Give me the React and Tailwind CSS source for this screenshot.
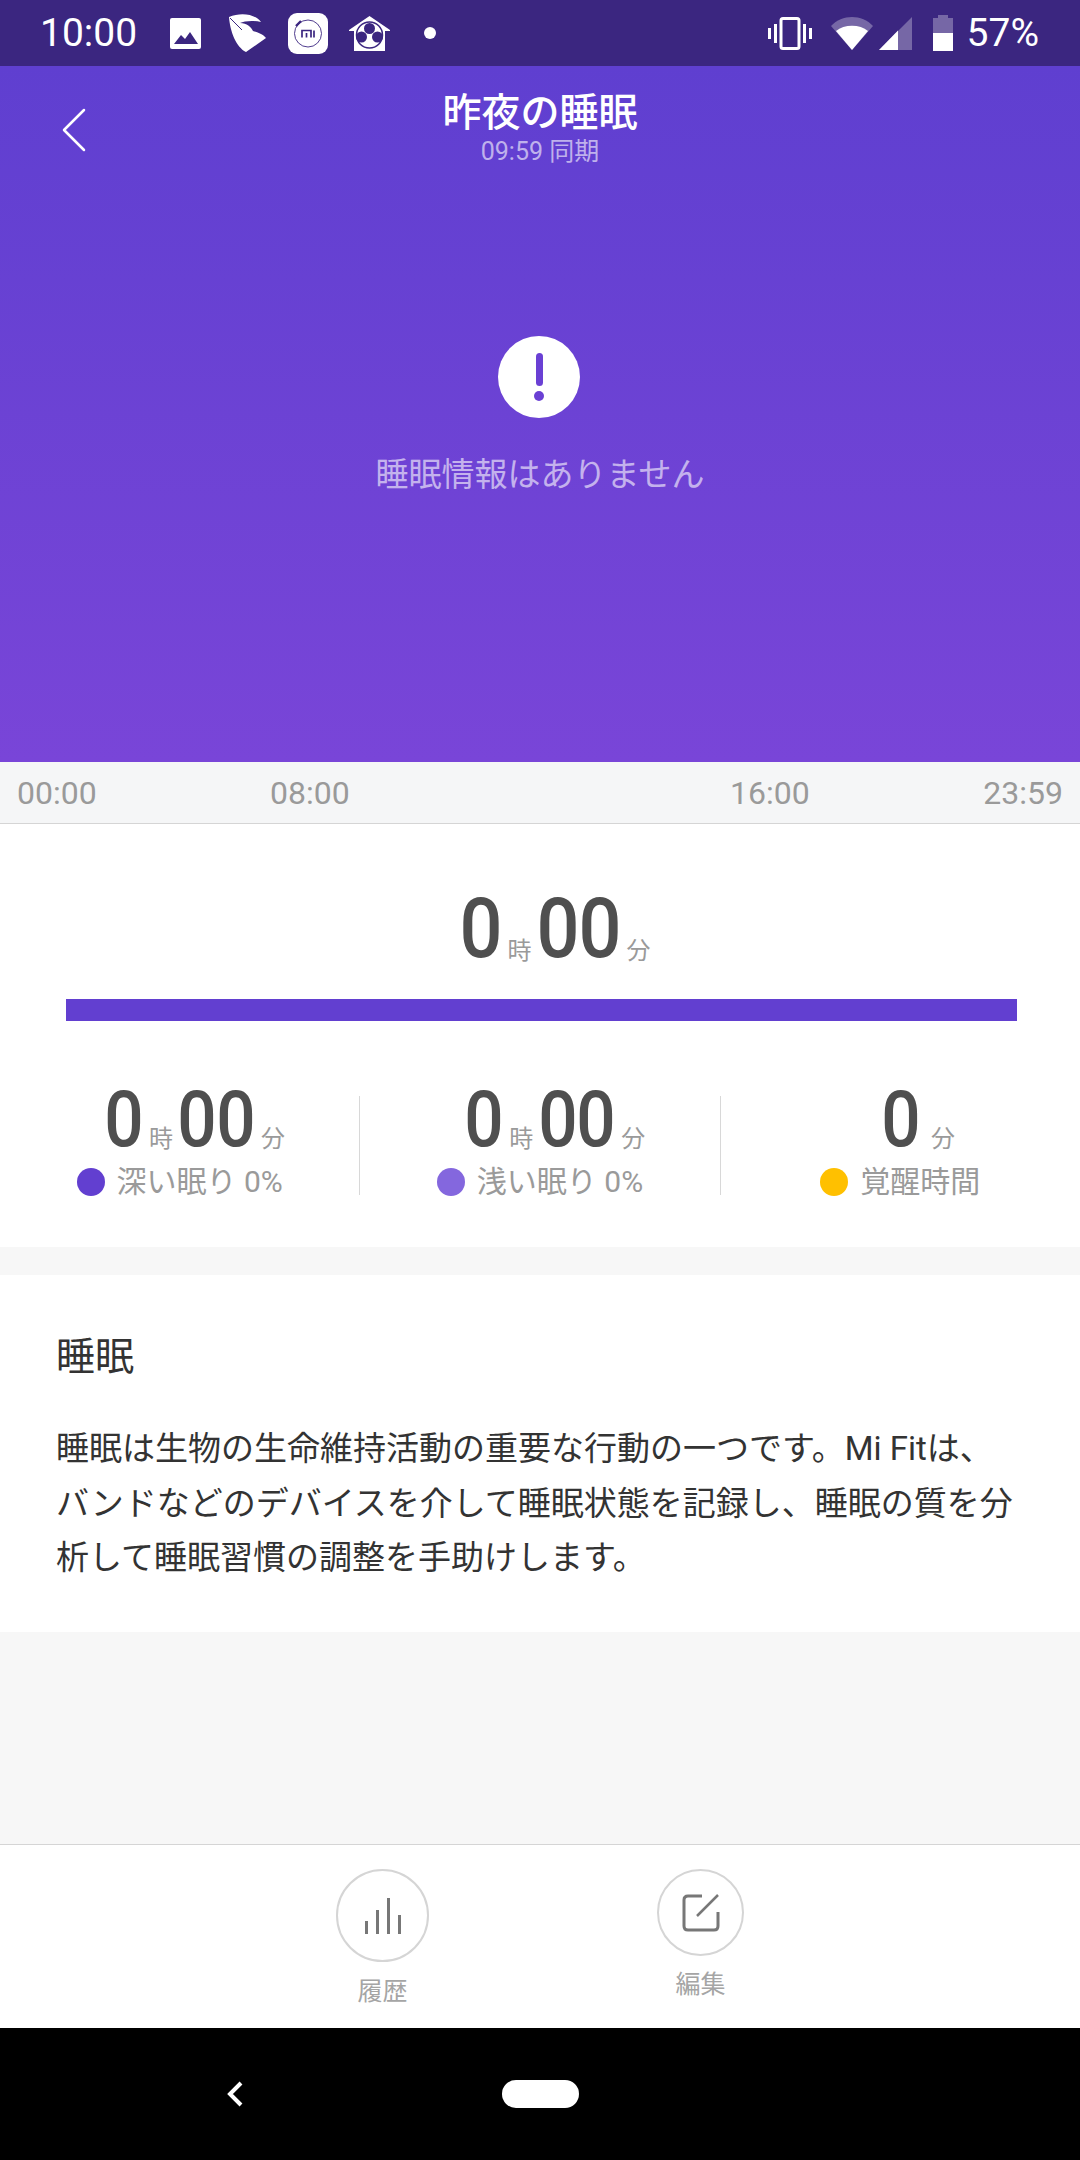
import React from 'react';

const sans = "font-['Roboto','Noto_Sans_CJK_JP',sans-serif]";

function StatusIcons() {
  return (
    <div className="flex items-center">
      <svg width="31" height="31" viewBox="0 0 31 31" className="ml-[33px]">
        <rect width="31" height="31" rx="2" fill="#fff" />
        <path d="M4 26 L11 17 L15 21 L20 14 L28 26 Z" fill="#3b2680" />
      </svg>
      <svg width="37" height="40" viewBox="0 0 37 40" className="ml-[28px]">
        <path d="M0 4 C12 -1 26 1 32 9 C24 7 15 8 11 10 C18 10 22 14 24 18 C28 19 34 21 37 25 L17 39 C7 34 1 18 0 4 Z" fill="#fff" />
        <path d="M1 5 L13 17" stroke="#3b2680" strokeWidth="1" />
      </svg>
      <svg width="40" height="41" viewBox="0 0 40 41" className="ml-[22px]">
        <rect width="40" height="41" rx="9" fill="#fff" />
        <circle cx="20" cy="20.5" r="13.5" fill="none" stroke="#3b2680" strokeWidth="0.9" />
        <path d="M8 13 L13 8" stroke="#3b2680" strokeWidth="2.4" />
        <path d="M14 24.5 V17.5 H23 V24.5 M18.5 20 V24.5 M26 17.5 V24.5" fill="none" stroke="#3b2680" strokeWidth="1.7" />
      </svg>
      <svg width="41" height="35" viewBox="0 0 41 35" className="ml-[21px]">
        <path d="M20.5 0 L41 14 V15 H36 V35 H5 V15 H0 V14 Z" fill="#fff" />
        <circle cx="20.5" cy="19" r="13" fill="none" stroke="#3b2680" strokeWidth="1.5" />
        <circle cx="20.5" cy="12.5" r="5.5" fill="#3b2680" />
        <circle cx="12.5" cy="21" r="5.5" fill="#3b2680" />
        <circle cx="28.5" cy="21" r="5.5" fill="#3b2680" />
      </svg>
      <div className="w-3 h-3 rounded-full bg-white ml-[34px]" />
    </div>
  );
}

function StatusRight() {
  return (
    <div className="flex items-center">
      <svg width="44" height="33" viewBox="0 0 44 33">
        <rect x="13" y="1.5" width="18" height="30" rx="2" fill="none" stroke="#fff" strokeWidth="3" />
        <path d="M1.5 11 V22 M7.5 7 V26 M36.5 7 V26 M42.5 11 V22" stroke="#fff" strokeWidth="3" />
      </svg>
      <svg width="42" height="33" viewBox="0 0 42 33" className="ml-[19px]">
        <path d="M0 9 C11 -3 31 -3 42 9 L21 33 Z" fill="#fff" fillOpacity="0.3" />
        <path d="M5 14 C13 7 29 7 37 14 L21 33 Z" fill="#fff" />
      </svg>
      <svg width="33" height="33" viewBox="0 0 33 33" className="ml-[6px]">
        <path d="M33 0 V33 H0 Z" fill="#fff" fillOpacity="0.3" />
        <path d="M19 13.5 V33 H0 Z" fill="#fff" />
      </svg>
      <svg width="20" height="36" viewBox="0 0 20 36" className="ml-[21px]">
        <path d="M5 0 H15 V3 H20 V36 H0 V3 H5 Z" fill="#fff" fillOpacity="0.3" />
        <path d="M0 18 H20 V36 H0 Z" fill="#fff" />
      </svg>
      <span className="ml-[14px] text-[39px] leading-none font-[450] text-white font-['Roboto',sans-serif]">57%</span>
    </div>
  );
}

function Digits({ value, big }) {
  return (
    <span className="flex">
      {value.split('').map((d, i) => (
        <span key={i} className={big ? 'w-[42px] flex justify-center' : 'w-[38.5px] flex justify-center'}>
          <span className={big ? 'scale-x-90 font-medium text-[84px] leading-[84px]' : 'scale-x-90 font-medium text-[77px] leading-[77px]'}>{d}</span>
        </span>
      ))}
    </span>
  );
}

function Duration({ h, m, big }) {
  const unit = 'text-[24px] leading-[30px] text-[#9a9a9a] mb-[5px]';
  if (h === null) {
    return (
      <div className="flex items-end justify-center text-[#4f4f4f] pl-[36px]">
        <Digits value={m} />
        <span className={`${unit} ml-[11px]`}>分</span>
      </div>
    );
  }
  return (
    <div className="flex items-end justify-center text-[#4f4f4f] pl-[30px]">
      <Digits value={h} big={big} />
      <span className={`${unit} ml-[6px] mr-[5px]`}>時</span>
      <Digits value={m} big={big} />
      <span className={`${unit} ml-[6px]`}>分</span>
    </div>
  );
}

function Stat({ h, m, dot, label }) {
  return (
    <div className="flex-1 flex flex-col items-center">
      <Duration h={h} m={m} />
      <div className="flex items-center mt-[5px]">
        <span className={`w-7 h-7 rounded-full ${dot}`} />
        <span className="ml-[12px] text-[30px] leading-[36px] text-[#9a9a9a]">{label}</span>
      </div>
    </div>
  );
}

export default function App() {
  return (
    <div className={`w-[1080px] h-[2160px] flex flex-col bg-[#f7f7f7] overflow-hidden ${sans}`}>
      <div className="h-[66px] shrink-0 bg-[#3b2680] flex items-center justify-between pl-[40px] pr-[41px]">
        <div className="flex items-center">
          <span className="text-[39px] leading-none font-[450] text-white font-['Roboto',sans-serif]">10:00</span>
          <StatusIcons />
        </div>
        <StatusRight />
      </div>

      <div className="h-[696px] shrink-0 bg-gradient-to-b from-[#5f3fd0] to-[#7945d8] flex flex-col items-center relative">
        <svg width="24" height="44" viewBox="0 0 24 44" className="absolute left-[62px] top-[42px]">
          <path d="M22 2 L2 22 L22 42" fill="none" stroke="#fff" strokeWidth="2.5" strokeLinecap="round" strokeLinejoin="round" />
        </svg>
        <h1 className="mt-[24px] text-[39px] leading-[46px] font-medium text-white">昨夜の睡眠</h1>
        <p className="mt-[1px] text-[25px] leading-[30px] text-white/60">09:59 同期</p>
        <div className="mt-[169px] mr-[2px] w-[82px] h-[82px] rounded-full bg-white flex flex-col items-center justify-center">
          <span className="w-[7px] h-[33px] rounded-full bg-[#6a40d4]" />
          <span className="w-[10px] h-[10px] rounded-full bg-[#6a40d4] mt-[5px]" />
        </div>
        <p className="mt-[35px] text-[33px] leading-[44px] text-white/60">睡眠情報はありません</p>
      </div>

      <div className="h-[62px] shrink-0 bg-[#f5f6f7] border-b border-[#d5d5d5] relative text-[32px] leading-[62px] text-[#9a9a9a]">
        <span className="absolute left-[17px]">00:00</span>
        <span className="absolute left-[270px]">08:00</span>
        <span className="absolute left-[730px]">16:00</span>
        <span className="absolute right-[17px]">23:59</span>
      </div>

      <div className="h-[423px] shrink-0 bg-white flex flex-col pt-[63px]">
        <Duration h="0" m="00" big />
        <div className="ml-[66px] mr-[63px] mt-[28px] h-[22px] bg-[#623fd0]" />
        <div className="mt-[61px] flex items-stretch">
          <Stat h="0" m="00" dot="bg-[#623fd0]" label="深い眠り 0%" />
          <div className="w-px self-center mt-[8px] h-[99px] bg-[#d8d8d8]" />
          <Stat h="0" m="00" dot="bg-[#8467de]" label="浅い眠り 0%" />
          <div className="w-px self-center mt-[8px] h-[99px] bg-[#d8d8d8]" />
          <Stat h={null} m="0" dot="bg-[#ffc000]" label="覚醒時間" />
        </div>
      </div>

      <div className="mt-[28px] h-[357px] shrink-0 bg-white px-[56px] pt-[59px]">
        <h2 className="text-[39px] leading-[46px] text-[#333]">睡眠</h2>
        <p className="mt-[42px] text-[33px] leading-[54.5px] text-[#333]">
          睡眠は生物の生命維持活動の重要な行動の一つです。Mi Fitは、バンドなどのデバイスを介して睡眠状態を記録し、睡眠の質を分析して睡眠習慣の調整を手助けします。
        </p>
      </div>

      <div className="flex-1" />

      <div className="h-[184px] shrink-0 bg-white border-t border-[#d5d5d5] relative">
        <div className="absolute left-[336px] top-[24px] flex flex-col items-center w-[93px]">
          <div className="w-[93px] h-[93px] rounded-full border-2 border-[#d5d5d5] flex items-center justify-center">
            <svg width="36" height="36" viewBox="0 0 36 36">
              <path d="M1.5 36 V23 M12.5 36 V12 M23.5 36 V0 M34.5 36 V17" stroke="#777" strokeWidth="3" />
            </svg>
          </div>
          <span className="mt-[15px] text-[25px] leading-[30px] text-[#a5a5a5]">履歴</span>
        </div>
        <div className="absolute left-[657px] top-[24px] flex flex-col items-center w-[87px]">
          <div className="w-[87px] h-[87px] rounded-full border-2 border-[#d5d5d5] flex items-center justify-center">
            <svg width="38" height="38" viewBox="0 0 38 38">
              <path d="M20 2 H6 Q2 2 2 6 V32 Q2 36 6 36 H32 Q36 36 36 32 V18" fill="none" stroke="#777" strokeWidth="3" />
              <path d="M15 22 L36 1" stroke="#777" strokeWidth="2.5" />
            </svg>
          </div>
          <span className="mt-[14px] text-[25px] leading-[30px] text-[#a5a5a5]">編集</span>
        </div>
      </div>

      <div className="h-[132px] shrink-0 bg-black relative flex items-center justify-center">
        <svg width="20" height="28" viewBox="0 0 20 28" className="absolute left-[225px] top-[52px]">
          <path d="M16 3 L5 14 L16 25" fill="none" stroke="#fff" strokeWidth="4" />
        </svg>
        <div className="w-[77px] h-[28px] rounded-full bg-white" />
      </div>
    </div>
  );
}
